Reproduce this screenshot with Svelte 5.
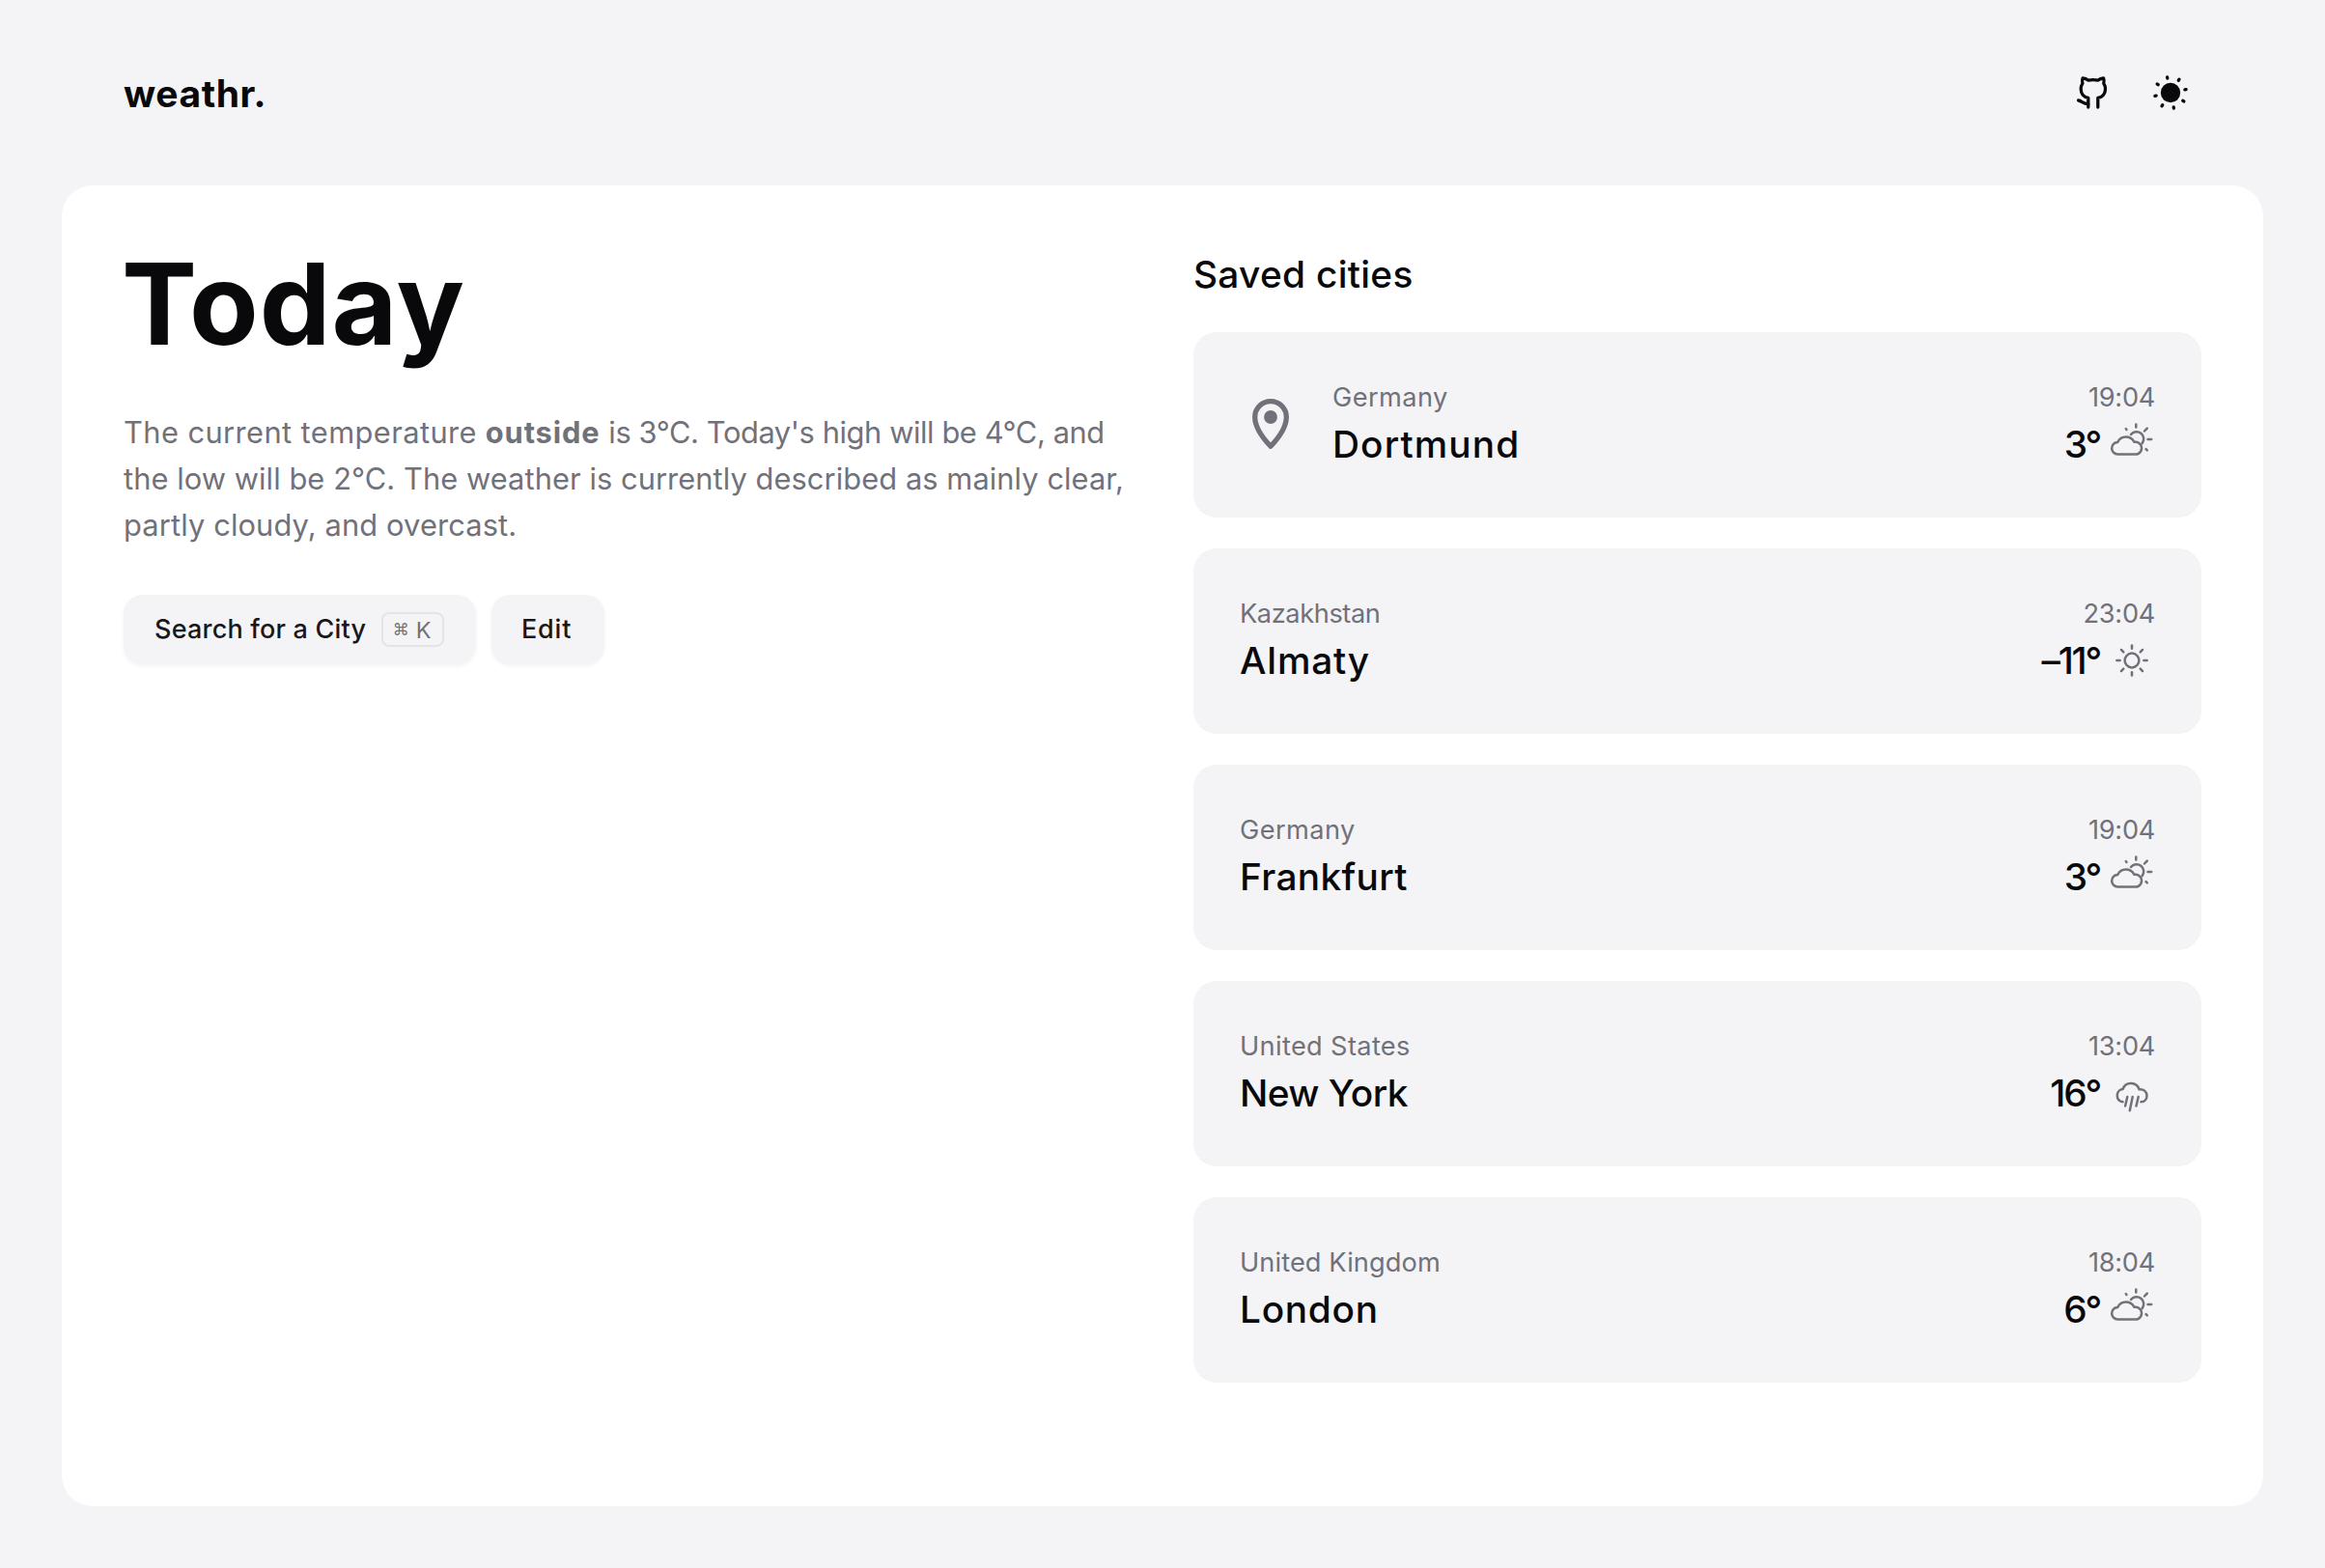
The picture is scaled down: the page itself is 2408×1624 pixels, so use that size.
<script>
  const cities = [
    { country: 'Germany', name: 'Dortmund', time: '19:04', temp: '3°', icon: 'cloudy', current: true, track: 1.1, sub: 0.4 },
    { country: 'Kazakhstan', name: 'Almaty', time: '23:04', temp: '–11°', icon: 'sun', track: 0.8, sub: -0.4 },
    { country: 'Germany', name: 'Frankfurt', time: '19:04', temp: '3°', icon: 'cloudy', track: 0.35, sub: 0.4 },
    { country: 'United States', name: 'New York', time: '13:04', temp: '16°', icon: 'rain', track: -0.57, sub: 0.35 },
    { country: 'United Kingdom', name: 'London', time: '18:04', temp: '6°', icon: 'cloudy', track: 0.7, sub: 0.1 }
  ];
  const rays = [0, 45, 90, 135, 180, 225, 270, 315];
</script>

<div class="page">
  <header>
    <a class="brand" href="/">weathr.</a>
    <nav>
      <button class="icon-button" aria-label="GitHub">
        <svg class="github" viewBox="0 0 36 36">
          <path d="M12.8 33V23.4C8.2 22.8 5.2 19.4 5.2 14.3C5.2 11.9 5.8 10 6.9 8.4C6.4 6.6 6.4 4.7 7.1 3C9.2 3 11.3 3.8 13 5.2C16.2 4.5 19.5 4.5 22.7 5.2C24.4 3.8 26.500 3 28.600 3C29.300 4.700 29.300 6.600 28.800 8.400C29.900 10 30.500 11.900 30.500 14.300C30.500 19.400 27.500 22.800 22.800 23.400V33" />
          <path d="M2.600 26C6.400 26.600 7 29.400 12.800 29.600" />
        </svg>
      </button>
      <button class="icon-button" aria-label="Toggle theme">
        <svg class="theme" viewBox="-24 -24 48 48">
          <circle r="10.200" />
          {#each rays as angle}
            <path d="M0 -15.200V-16.500" transform="rotate({angle - 12})" />
          {/each}
        </svg>
      </button>
    </nav>
  </header>

  <main>
    <section class="today">
      <h1>Today</h1>
      <p>
        <span class="lead">The current temperature</span> <strong>outside</strong>
        <span class="range">is 3°C. Today's high will be 4°C, and</span><br />
        <span class="low">the low will be 2°C. The weather is currently described as mainly clear,</span><br />
        partly cloudy, and overcast.
      </p>
      <div class="actions">
        <button class="action search">Search for a City <kbd><span class="cmd">⌘</span>K</kbd></button>
        <button class="action edit">Edit</button>
      </div>
    </section>

    <section class="saved">
      <h2>Saved cities</h2>
      <ul>
        {#each cities as city}
          <li>
            {#if city.current}
              <svg class="pin" viewBox="0 0 64 64">
                <path d="M32 54.300C23 44.800 15.700 34 15.700 24a16.300 16.300 0 0 1 32.600 0C48.300 34 41 44.800 32 54.300Z" />
                <circle cx="32" cy="24" r="6.900" />
              </svg>
            {/if}
            <div class="place">
              <span class="small" style:letter-spacing="{city.sub}px">{city.country}</span>
              <span class="large" style:letter-spacing="{city.track}px">{city.name}</span>
            </div>
            <div class="reading">
              <span class="small clock">{city.time}</span>
              <div class="large now">
                <span class="temp">{city.temp}</span>
                <svg class="weather" viewBox="0 0 48 48">
                  {#if city.icon === 'sun'}
                    <circle cx="24" cy="24" r="7.400" />
                    {#each rays as angle}
                      <path d="M24 11.700V8.400" transform="rotate({angle} 24 24)" />
                    {/each}
                  {:else if city.icon === 'rain'}
                    <g transform="translate(0 -1)">
                      <path d="M14.500 34.300C11 33.500 8.800 30.700 8.800 27.700C8.800 24.200 11.300 21.300 14.600 21A8.900 8.900 0 0 1 31.600 21.300C36.400 20.900 39.500 23.800 39.500 27.900C39.500 31.400 37 34.200 33.500 34.300" />
                      <path d="M19.300 29L17.100 38.500M24.700 29L21.800 43.300M30.700 29L28.500 38.500" />
                    </g>
                  {:else}
                    <path d="M9.600 34.500A6.300 6.300 0 0 1 9.300 21.900A9.500 9.500 0 0 1 26.300 21.800A6.350 6.350 0 1 1 28.900 34.500Z" />
                    <path d="M23 14A7.200 7.200 0 1 1 34.600 23.200" />
                    <path d="M28.300 3.500V6.500M17.800 8L18.500 8.900M37 10.500L39.800 7.600M40.500 19H44.200M38.600 29.200L39.800 30.300" />
                  {/if}
                </svg>
              </div>
            </div>
          </li>
        {/each}
      </ul>
    </section>
  </main>
</div>

<style>
  :global(body) {
    margin: 0;
    background: #f4f4f6;
  }

  .page {
    box-sizing: border-box;
    min-height: 1624px;
    padding: 0 64px 64px;
    display: flex;
    flex-direction: column;
    background: #f4f4f6;
    color: #09090b;
    font-family: Inter, 'Liberation Sans', sans-serif;
    font-size: 30.8px;
  }

  header {
    height: 192px;
    padding: 0 72px 0 64px;
    display: flex;
    align-items: center;
    justify-content: space-between;
  }

  .brand {
    color: inherit;
    text-decoration: none;
    font-size: 39px;
    font-weight: 700;
    letter-spacing: 0.6px;
  }

  nav {
    display: flex;
    align-items: center;
    gap: 32px;
  }

  .icon-button {
    width: 48px;
    height: 48px;
    padding: 0;
    border: 0;
    background: none;
    display: flex;
    align-items: center;
    justify-content: center;
  }

  .github {
    width: 36px;
    height: 36px;
    fill: none;
    stroke: #09090b;
    stroke-width: 3.3;
    stroke-linecap: round;
    stroke-linejoin: round;
  }

  .theme {
    width: 48px;
    height: 48px;
    fill: #09090b;
    stroke: #09090b;
    stroke-width: 3.3;
    stroke-linecap: round;
  }

  .theme circle {
    stroke: none;
  }

  main {
    flex: 1;
    padding: 64px;
    display: grid;
    grid-template-columns: 1fr 1fr;
    gap: 64px;
    background: #fff;
    border-radius: 32px;
  }

  h1 {
    margin: 0 0 50px -2px;
    font-size: 117px;
    line-height: 118px;
    font-weight: 700;
    letter-spacing: 1px;
  }

  p {
    margin: 0 0 48px;
    line-height: 48px;
    color: #71717a;
    letter-spacing: 0.14px;
    white-space: nowrap;
  }

  .lead {
    letter-spacing: 0.42px;
  }

  strong {
    font-weight: 700;
    letter-spacing: 0.9px;
  }

  .range {
    letter-spacing: -0.4px;
  }

  .low {
    letter-spacing: 0.08px;
  }

  .actions {
    display: flex;
    gap: 16px;
  }

  .action {
    height: 72px;
    padding: 0 0 2px 32px;
    display: flex;
    align-items: center;
    gap: 16px;
    border: 0;
    border-radius: 20px;
    background: #f4f4f6;
    box-shadow: 0 2px 4px rgb(0 0 0 / 5%);
    color: #18181b;
    font: 500 27px Inter, 'Liberation Sans', sans-serif;
    letter-spacing: 0.2px;
  }

  .search {
    width: 365px;
  }

  .edit {
    width: 117px;
    padding-left: 31px;
    letter-spacing: 0.8px;
  }

  kbd {
    box-sizing: border-box;
    width: 65px;
    height: 36px;
    margin-top: 2px;
    padding-right: 2px;
    display: flex;
    align-items: center;
    justify-content: center;
    gap: 7px;
    border: 2px solid #e4e4e7;
    border-radius: 8px;
    color: #71717a;
    font: 400 23.500px Inter, 'Liberation Sans', sans-serif;
    letter-spacing: 0;
  }

  .cmd {
    font: 17px 'DejaVu Sans', sans-serif;
  }

  h2 {
    margin: 0 0 32px;
    font-size: 38.8px;
    line-height: 56px;
    font-weight: 500;
    letter-spacing: 0.3px;
  }

  ul {
    margin: 0;
    padding: 0;
    list-style: none;
    display: grid;
    gap: 32px;
  }

  li {
    box-sizing: border-box;
    height: 192px;
    padding: 48px;
    display: flex;
    border-radius: 24px;
    background: #f4f4f6;
  }

  .pin {
    width: 64px;
    height: 64px;
    margin: 16px 32px 0 0;
    fill: none;
    stroke: #71717a;
    stroke-width: 5.3;
    stroke-linejoin: round;
  }

  .pin circle {
    fill: #71717a;
    stroke: none;
  }

  .place,
  .reading {
    display: flex;
    flex-direction: column;
  }

  .reading {
    margin-left: auto;
    align-items: flex-end;
  }

  .small {
    font-size: 27.2px;
    line-height: 40px;
    color: #71717a;
  }

  .clock {
    letter-spacing: -0.3px;
  }

  .large {
    font-size: 38.8px;
    line-height: 56px;
    font-weight: 500;
  }

  .now {
    display: flex;
    align-items: center;
  }

  .temp {
    margin-right: 9px;
    letter-spacing: -2.2px;
  }

  .weather {
    width: 48px;
    height: 48px;
    fill: none;
    stroke: #71717a;
    stroke-width: 2.5;
    stroke-linecap: round;
    stroke-linejoin: round;
  }
</style>
